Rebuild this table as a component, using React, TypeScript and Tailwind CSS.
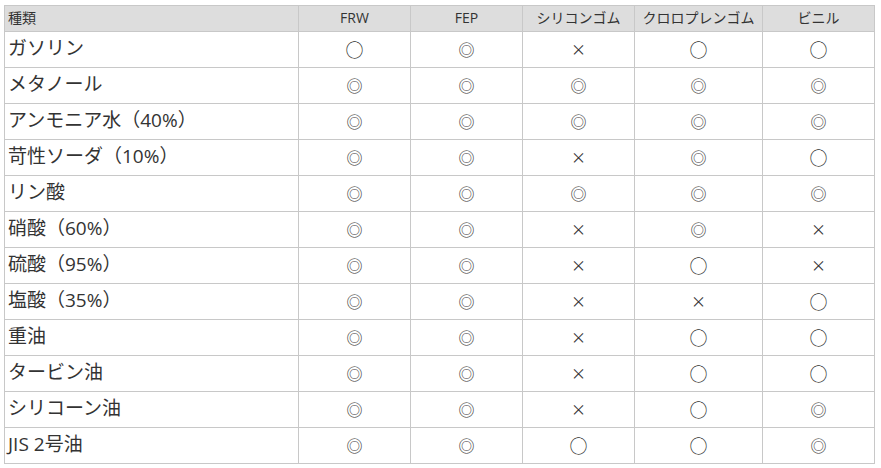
const cols = ['FRW', 'FEP', 'シリコンゴム', 'クロロプレンゴム', 'ビニル'];

const rows: [string, string[]][] = [
  ['ガソリン', ['○', '◎', '×', '○', '○']],
  ['メタノール', ['◎', '◎', '◎', '◎', '◎']],
  ['アンモニア水（40%）', ['◎', '◎', '◎', '◎', '◎']],
  ['苛性ソーダ（10%）', ['◎', '◎', '×', '◎', '○']],
  ['リン酸', ['◎', '◎', '◎', '◎', '◎']],
  ['硝酸（60%）', ['◎', '◎', '×', '◎', '×']],
  ['硫酸（95%）', ['◎', '◎', '×', '○', '×']],
  ['塩酸（35%）', ['◎', '◎', '×', '×', '○']],
  ['重油', ['◎', '◎', '×', '○', '○']],
  ['タービン油', ['◎', '◎', '×', '○', '○']],
  ['シリコーン油', ['◎', '◎', '×', '○', '◎']],
  ['JIS 2号油', ['◎', '◎', '○', '○', '◎']],
];

const markClass: Record<string, string> = {
  '○': 'text-[18px]',
  '◎': 'text-[16px]',
  '×': 'text-[15px]',
};

export default function App() {
  return (
    <div className="bg-white min-h-[468px] pt-[5px] pl-[4px] font-['Open_Sans','Noto_Sans_CJK_JP',sans-serif] text-[#333]">
      <table className="w-[870px] border-collapse table-fixed">
        <colgroup>
          <col className="w-[294px]" />
          <col className="w-[112px]" />
          <col className="w-[112px]" />
          <col className="w-[112px]" />
          <col className="w-[128px]" />
          <col className="w-[112px]" />
        </colgroup>
        <thead>
          <tr className="bg-[#dddddd] h-[26px]">
            <th className="border border-[#c8c8c8] text-left font-normal text-[14px] pl-[3px] pb-[1px] leading-none">種類</th>
            {cols.map((c) => (
              <th key={c} className="border border-[#c8c8c8] font-normal text-[14px] pb-[1px] leading-none whitespace-nowrap">
                {c}
              </th>
            ))}
          </tr>
        </thead>
        <tbody>
          {rows.map(([name, vals]) => (
            <tr key={name} className="h-[36px]">
              <td className="border border-[#c8c8c8] text-[19px] pl-[3px] pb-[3px] leading-none whitespace-nowrap">{name}</td>
              {vals.map((v, i) => (
                <td
                  key={i}
                  className={`border border-[#c8c8c8] text-center leading-none pb-[2px] font-['Noto_Sans_CJK_JP',sans-serif] ${markClass[v]}`}
                >
                  {v}
                </td>
              ))}
            </tr>
          ))}
        </tbody>
      </table>
    </div>
  );
}
